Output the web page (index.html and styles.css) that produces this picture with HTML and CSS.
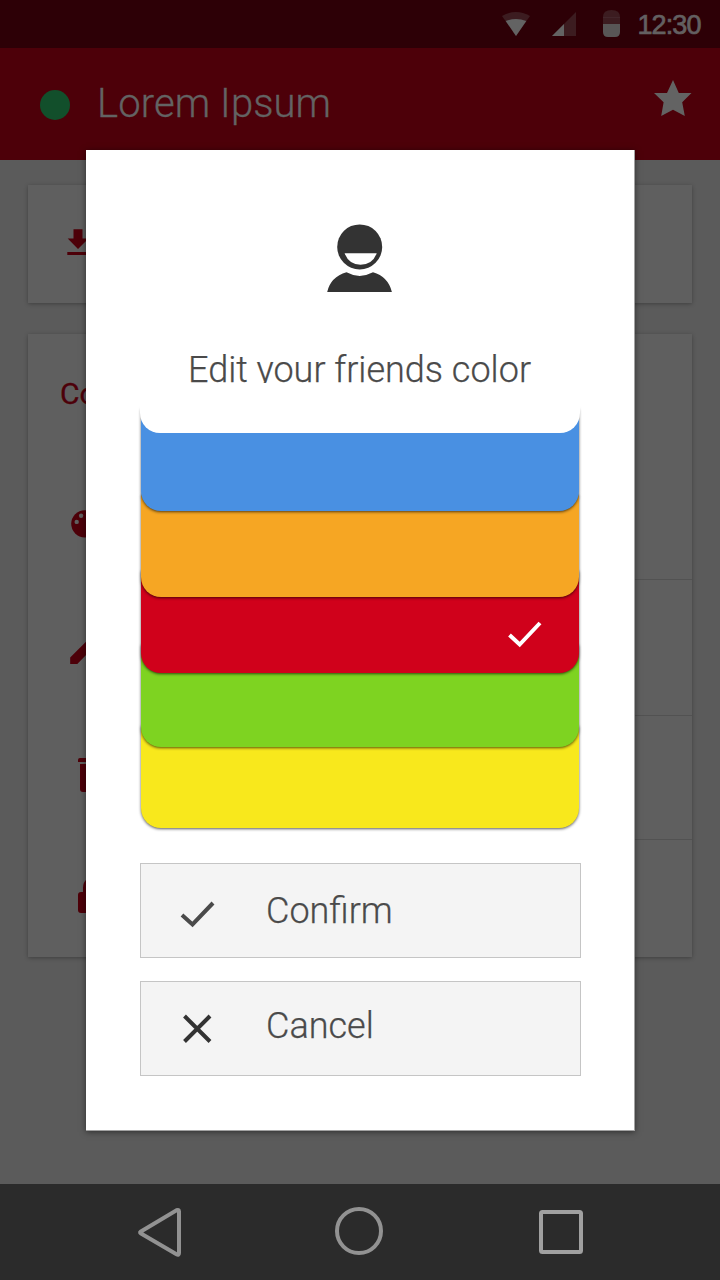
FILE: index.html
```html
<!DOCTYPE html>
<html lang="en">
<head>
<meta charset="utf-8">
<title>Edit your friends color</title>
<link rel="stylesheet" href="styles.css">
</head>
<body>
<div class="screen">
  <div class="status-bar">
    <svg class="status-icons" width="120" height="48" viewBox="502 0 120 48">
      <path class="faint" d="M502 16Q516 8 530 16L516 36Z"/>
      <path class="lit" d="M505.700 21Q516 17 526.300 21L516 36Z"/>
      <path class="faint" d="M552 36L576 12V36Z"/>
      <path class="lit" d="M552 36L564 24V36Z"/>
      <path class="faint" d="M603 24V17Q603 10 611.500 10T620 17V24Z"/>
      <path class="battery" d="M603 24H620V32Q620 37 615 37H608Q603 37 603 32Z"/>
      <path class="cap-line" d="M603 17.500H620"/>
    </svg>
    <span class="clock">12:30</span>
  </div>
  <header class="app-bar">
    <span class="dot"></span>
    <h1 class="app-title">Lorem Ipsum</h1>
    <svg class="star" width="38" height="36" viewBox="0 0 38 36"><path d="M19 0L24.800 13H37.500L28.200 22.200L30.800 36L19 29.700L7.200 36L9.600 22.200L0 13H13Z"/></svg>
  </header>
  <main class="content">
    <section class="card card-small">
      <svg class="icon" width="40" height="40" viewBox="66 224 40 40"><path d="M73.500 229.300H82.500V238.500H88.500L78 249L67.700 238.500H73.500ZM67.300 252H88.700V255H67.300Z"/></svg>
    </section>
    <section class="card card-list">
      <h2 class="card-title">Co</h2>
      <div class="row row-color"><svg class="icon" width="40" height="40" viewBox="66 504 40 40"><circle cx="84.800" cy="523.800" r="13.600"/><g class="hole"><circle cx="76.700" cy="521.900" r="2.200"/><circle cx="81.100" cy="515.700" r="2.200"/></g></svg></div>
      <div class="row row-edit"><svg class="icon" width="40" height="40" viewBox="66 628 40 40"><path d="M70.200 657.500L90 637.700L96.500 644.200L77.300 664H70.200Z"/></svg></div>
      <div class="row row-delete"><svg class="icon" width="40" height="40" viewBox="66 758 40 40"><path d="M78 762V760Q78 758 80 758H84L86 756V762ZM80 764H100V792H83Q80 792 80 789Z"/></svg></div>
      <div class="row row-lock"><svg class="icon" width="40" height="41" viewBox="66 878 40 41"><path d="M83 892V888Q83 882 87 879V892H98V913H81Q78 913 78 910V895Q78 892 81 892Z"/></svg></div>
    </section>
  </main>
  <nav class="nav-bar">
    <svg width="720" height="96" viewBox="0 1184 720 96">
      <path d="M140.500 1231.800L176.500 1210.200Q179 1209.300 179 1211.500V1253Q179 1255.700 176.500 1254.300L141 1233.500Q139.500 1232.600 140.500 1231.800Z"/>
      <circle cx="359" cy="1231" r="22"/>
      <rect class="recent" x="541" y="1212" width="40" height="40" rx="1.500"/>
    </svg>
  </nav>
  <div class="dialog" role="dialog">
    <svg class="avatar" width="66" height="69" viewBox="327 224 66 69">
      <circle cx="359.700" cy="246.900" r="22.500"/>
      <path class="smile" d="M344.600 253.300H376.700Q372.500 264.700 360.500 264.700Q349 264.700 344.600 253.300Z"/>
      <path d="M327.200 292Q330.500 277 346.500 272.300Q359.500 279.500 373 272.300Q388 276.500 391.900 292Z"/>
    </svg>
    <p class="prompt">Edit your friends color</p>
    <div class="swatches">
      <div class="mask"></div>
      <div class="swatch blue"></div>
      <div class="swatch orange"></div>
      <div class="swatch red"><svg class="check" width="36" height="30" viewBox="0 0 36 30"><path d="M2.500 15L12.700 24.500L33 3"/></svg></div>
      <div class="swatch green"></div>
      <div class="swatch yellow"></div>
    </div>
    <button class="action confirm"><svg width="36" height="30" viewBox="0 0 36 30"><path class="tick" d="M2 15L12.500 24.500L33 3"/></svg><span>Confirm</span></button>
    <button class="action cancel"><svg width="36" height="30" viewBox="0 0 36 30"><path class="cross" d="M4.500 3L30 28.500M30 3L4.500 28.500"/></svg><span>Cancel</span></button>
  </div>
</div>
</body>
</html>
```

FILE: styles.css
```css
* { box-sizing: border-box; }
body { margin: 0; font-family: Roboto, "Liberation Sans", sans-serif; }
h1, h2, p { margin: 0; }
svg { display: block; flex: none; }
.screen { position: relative; display: flex; flex-direction: column; width: 720px; height: 1280px; overflow: hidden; background: #5b5b5b; }

.status-bar { display: flex; height: 48px; padding-left: 502px; background: #2d0006; }
.faint { fill: #3c1c20; }
.lit { fill: #636363; }
.battery { fill: #585656; }
.cap-line { stroke: #42252a; }
.clock { margin-left: 15.500px; font: 27px/50px "Liberation Sans", sans-serif; letter-spacing: -0.900px; color: #636061; -webkit-text-stroke: 0.700px #636061; }

.app-bar { display: flex; height: 112px; padding: 0 28px 0 40px; background: #4d0009; }
.dot { width: 30px; height: 30px; margin-top: 42px; border-radius: 50%; background: #124f2b; }
.app-title { flex: 1; margin-left: 27px; font-size: 40px; font-weight: 300; line-height: 112px; letter-spacing: 0.100px; color: #636363; -webkit-text-stroke: 0.300px #636363; }
.star { margin-top: 32px; fill: #636363; }

.content { flex: 1; padding: 25px 28px 0; }
.card { background: #5f5f5f; box-shadow: 0 1px 4px rgba(0, 0, 0, 0.300); }
.card-small { height: 118px; margin-bottom: 31px; padding: 39px 0 0 38px; }
.card-list { height: 623px; }
.card-title { height: 134px; padding: 42px 0 0 32px; font-size: 30px; font-weight: 400; line-height: 36px; color: #4d0009; -webkit-text-stroke: 0.300px #4d0009; }
.row { display: flex; align-items: center; margin-left: 96px; border-bottom: 1px solid #525252; }
.row .icon { margin-left: -58px; }
.row-color { height: 112px; }
.row-edit { height: 136px; }
.row-delete { height: 124px; }
.row-lock { height: 117px; border-bottom: 0; }
.icon { fill: #4d0009; }
.hole { fill: #5f5f5f; }

.nav-bar { height: 96px; background: #2b2b2b; }
.nav-bar svg { fill: none; stroke: #929292; stroke-width: 4; }
.nav-bar .recent { stroke: #a0a0a0; }

.dialog { position: absolute; left: 86px; top: 150px; display: flex; flex-direction: column; width: 549px; height: 981px; padding: 74px 54px 0; border: solid #a2a2a2; border-width: 0 1px 1px 0; background: #fff; box-shadow: 0 1px 6px rgba(0, 0, 0, 0.500); color: #4a4a4a; }
.avatar { margin-left: 187px; fill: #333; }
.smile { fill: #fff; }
.prompt { height: 34px; margin: 56px 1px 0 0; overflow: hidden; font-size: 36px; font-weight: 300; line-height: 42px; text-align: center; white-space: nowrap; -webkit-text-stroke: 0.250px #4a4a4a; }
.swatches { display: flex; flex-direction: column; isolation: isolate; width: 438px; margin: 22px 0 0 1px; }
.mask, .swatch { position: relative; flex: none; }
.mask { z-index: 6; height: 28px; margin: 0 -1px; border-radius: 0 0 20px 20px; background: #fff; }
.swatch { height: 104px; border-radius: 4px 4px 20px 20px; box-shadow: 0 1px 3px rgba(0, 0, 0, 0.650); }
.blue { z-index: 5; margin-top: -26px; background: #4990e2; }
.orange { z-index: 4; margin-top: -18px; background: #f6a623; }
.red { z-index: 3; margin-top: -28px; background: #d0011b; }
.green { z-index: 2; margin-top: -30px; background: #7ed321; }
.yellow { z-index: 1; margin-top: -23px; background: #f8e81c; }
.check { margin: 51px 0 0 366px; fill: none; stroke: #fff; stroke-width: 4; }
.action { display: flex; align-items: flex-start; width: 441px; height: 95px; padding: 0 0 0 39px; border: 1px solid #c5c5c5; background: #f4f4f4; color: #4a4a4a; font: 300 36px/94px Roboto, sans-serif; text-align: left; -webkit-text-stroke: 0.250px #4a4a4a; }
.action svg { margin-top: 36px; fill: none; }
.action span { margin-left: 50px; }
.tick { stroke: #4a4a4a; stroke-width: 4; }
.cross { stroke: #333; stroke-width: 4; }
.confirm { margin-top: 35px; }
.cancel { margin-top: 23px; }
.cancel span { margin-top: -3px; }
.cancel svg { margin-top: 31px; }
```
